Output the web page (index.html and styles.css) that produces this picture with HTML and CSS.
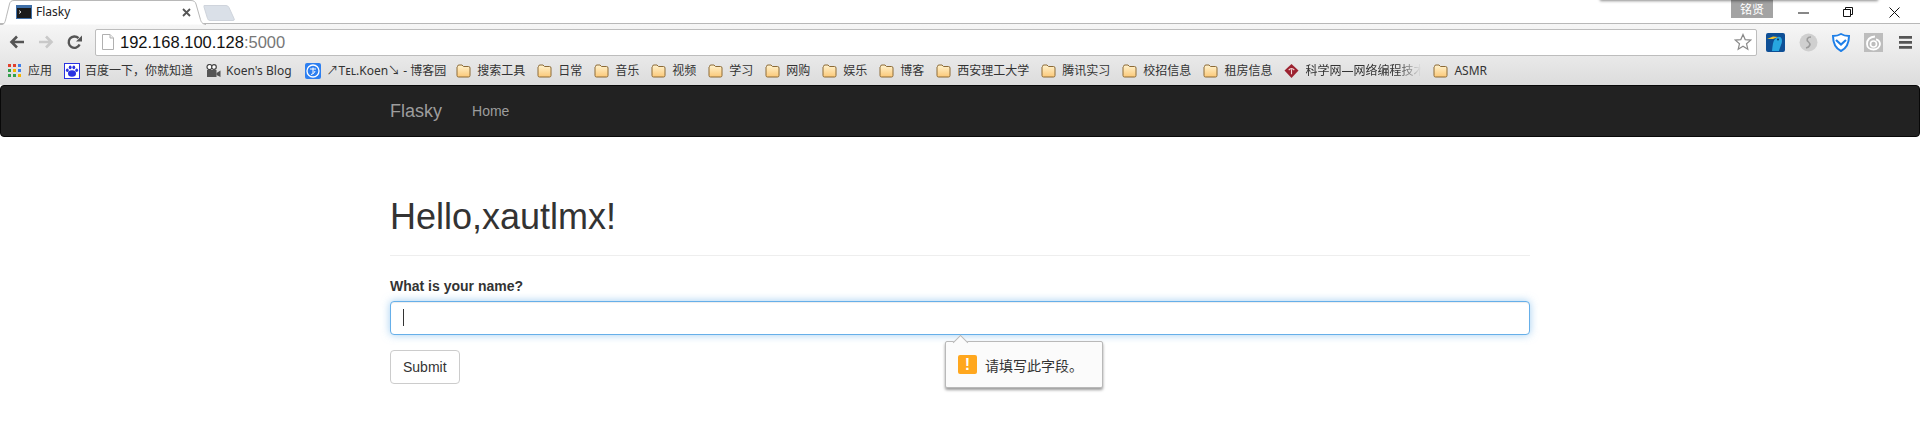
FILE: index.html
```html
<!DOCTYPE html>
<html lang="zh">
<head>
<meta charset="utf-8">
<title>Flasky</title>
<link rel="stylesheet" href="styles.css">
</head>
<body>
<svg class="defs" width="0" height="0" aria-hidden="true">
  <defs>
    <linearGradient id="folderFill" x1="0" y1="0" x2="0" y2="1">
      <stop offset="0" stop-color="#fff3cf"/>
      <stop offset="1" stop-color="#fbc878"/>
    </linearGradient>
    <symbol id="folder" viewBox="0 0 15 14">
      <path d="M1.5 2.5 Q1.5 1 3 1 H6 L7.5 2.5 H12.5 Q14 2.5 14 4 V11.5 Q14 13 12.5 13 H2.5 Q1 13 1 11.5 V3 Z" fill="url(#folderFill)" stroke="#8c6a36" stroke-width="1"/>
    </symbol>
  </defs>
</svg>

<header class="chrome">
  <div class="shade"></div>
  <div class="tabstrip">
    <div class="tab">
      <svg class="tab-shape" width="207" height="25" viewBox="0 0 207 25"><path d="M0 24.5 H2 C5 24.5 5.500 20 7 14 L9.500 4 C10 2 11 .5 14 .5 H191 C194 .5 195.500 2 196 4 L200 18 C201 22 202 24 206 24.500" fill="#fff" stroke="#b8b8b8"/></svg>
      <svg class="favicon" width="16" height="14" viewBox="0 0 16 14"><rect width="16" height="14" fill="#3f6fa8"/><rect x="1" y="3" width="14" height="10" fill="#1a1a1a"/><path d="M3 5.500 L5 7 L3 8.500" fill="none" stroke="#ddd"/></svg>
      <span class="tab-title">Flasky</span>
      <svg class="tab-close" width="9" height="9" viewBox="0 0 9 9"><path d="M1 1 L8 8 M8 1 L1 8" stroke="#555" stroke-width="1.800"/></svg>
    </div>
    <svg class="newtab" width="34" height="18" viewBox="0 0 34 18"><path d="M1 1.500 H23 Q25 1.500 26 3.500 L31 14.500 Q32 16.500 30 16.500 H7 Q5 16.500 4.500 14.500 L1 3 Z" fill="#dae0e8" stroke="#cfd4dc"/></svg>
    <div class="winbar">
      <span class="user-badge">铭贤</span>
      <svg class="win-icon win-min" width="11" height="2" viewBox="0 0 11 2"><rect width="11" height="1" y=".5" fill="#111"/></svg>
      <svg class="win-icon win-max" width="10" height="10" viewBox="0 0 10 10"><path d="M.5 2.500 H7.500 V9.500 H.5 Z M2.500 2.500 V.5 H9.500 V7.500 H7.500" fill="none" stroke="#111"/></svg>
      <svg class="win-icon win-close" width="11" height="11" viewBox="0 0 11 11"><path d="M.5 .5 L10.500 10.500 M10.500 .5 L.5 10.500" stroke="#111"/></svg>
    </div>
  </div>

  <div class="toolbar">
    <svg class="nav-icon" width="16" height="14" viewBox="0 0 16 14"><path d="M15 7 H3 M8 1.500 L2.500 7 L8 12.500" fill="none" stroke="#555" stroke-width="2.600"/></svg>
    <svg class="nav-icon" width="16" height="14" viewBox="0 0 16 14"><path d="M1 7 H13 M8 1.500 L13.500 7 L8 12.500" fill="none" stroke="#c9c9c9" stroke-width="2.600"/></svg>
    <svg class="nav-icon" width="15" height="15" viewBox="0 0 15 15"><path d="M12.600 9.500 A5.700 5.700 0 1 1 11.500 3.200" fill="none" stroke="#555" stroke-width="2.400"/><path d="M9 6.500 H15 V.5 Z" fill="#555"/></svg>
    <div class="omnibox">
      <svg class="page-icon" width="12" height="16" viewBox="0 0 12 16"><path d="M.5 .5 H8 L11.500 4 V15.500 H.5 Z" fill="#fff" stroke="#b0b0b0"/><path d="M8 .5 V4 H11.500" fill="#eee" stroke="#b0b0b0"/></svg>
      <span class="url">192.168.100.128<span class="url-port">:5000</span></span>
      <svg class="star" width="18" height="18" viewBox="0 0 18 18"><path d="M9 1.500 L11.200 6.600 L16.700 7.100 L12.500 10.700 L13.800 16.200 L9 13.300 L4.200 16.200 L5.500 10.700 L1.300 7.100 L6.800 6.600 Z" fill="#fff" stroke="#8a8a8a" stroke-width="1.200"/></svg>
    </div>
    <div class="extensions">
      <svg width="19" height="19" viewBox="0 0 19 19"><rect width="19" height="19" rx="2" fill="#0e4f96"/><path d="M6 18 C7 10 7 6 12 4 C16 3 17 8 15 12 C14 15 13 17 13 18 Z" fill="#27a6e0"/><path d="M1 6 L7 3.500 L12 4 L7 6 Z" fill="#f4c430"/><circle cx="12" cy="6.500" r="1" fill="#0b2f5a"/></svg>
      <svg width="19" height="19" viewBox="0 0 19 19"><circle cx="9.500" cy="9.500" r="9" fill="#cfcfcf"/><path d="M12 4 C8 4 7 7 9.500 9 C12 11 11 14 7 15" fill="none" stroke="#9b9b9b" stroke-width="1.600"/></svg>
      <svg width="18" height="19" viewBox="0 0 18 19"><path d="M9 1 C11.500 2.500 14 3 17 3 C17 10 15 15 9 18 C3 15 1 10 1 3 C4 3 6.500 2.500 9 1 Z" fill="#fff" stroke="#1e7fe8" stroke-width="2"/><path d="M4 7 L9 11.500 L14 7" fill="none" stroke="#1e7fe8" stroke-width="2.200"/></svg>
      <svg width="19" height="19" viewBox="0 0 19 19"><rect width="19" height="19" fill="#bdbdbd"/><circle cx="9.500" cy="11" r="3" fill="none" stroke="#fff" stroke-width="1.600"/><path d="M11 3.500 C6 4 3 7 3 11 C3 14.500 6 16.500 9.500 16.500 C13 16.500 16 14 16 11 C16 8.500 14 6.500 12 6.500" fill="none" stroke="#fff" stroke-width="1.800"/></svg>
      <svg class="menu-icon" width="13" height="13" viewBox="0 0 13 13"><path d="M0 0 H13 V2.800 H0 Z M0 5 H13 V7.800 H0 Z M0 10 H13 V12.800 H0 Z" fill="#555"/></svg>
    </div>
  </div>

  <nav class="bookmarks">
    <a class="bm bm-apps"><svg class="bm-icon" width="14" height="14" viewBox="0 0 14 14"><rect width="3" height="3" fill="#e2412d"/><rect x="5" width="3" height="3" fill="#e2412d"/><rect x="10" width="3" height="3" fill="#3f7fe8"/><rect y="5" width="3" height="3" fill="#33a04c"/><rect x="5" y="5" width="3" height="3" fill="#f5b400"/><rect x="10" y="5" width="3" height="3" fill="#3f7fe8"/><rect y="10" width="3" height="3" fill="#33a04c"/><rect x="5" y="10" width="3" height="3" fill="#33a04c"/><rect x="10" y="10" width="3" height="3" fill="#f5b400"/></svg>应用</a>
    <a class="bm bm-baidu"><svg class="bm-icon" width="16" height="16" viewBox="0 0 16 16"><rect x=".5" y=".5" width="15" height="15" fill="#fff" stroke="#2932e1"/><ellipse cx="8" cy="10.500" rx="4" ry="3.200" fill="#2932e1"/><ellipse cx="3.300" cy="7.300" rx="1.400" ry="1.800" fill="#2932e1"/><ellipse cx="6.200" cy="4.300" rx="1.400" ry="1.900" fill="#2932e1"/><ellipse cx="9.800" cy="4.300" rx="1.400" ry="1.900" fill="#2932e1"/><ellipse cx="12.700" cy="7.300" rx="1.400" ry="1.800" fill="#2932e1"/></svg>百度一下，你就知道</a>
    <a class="bm bm-koen"><svg class="bm-icon" width="15" height="14" viewBox="0 0 15 14"><circle cx="3.500" cy="3" r="2.500" fill="#fff" stroke="#444" stroke-width="1.200"/><circle cx="8" cy="3" r="2.300" fill="#fff" stroke="#444" stroke-width="1.200"/><rect x="1" y="6" width="9.500" height="7" fill="#555"/><path d="M10.500 9 L14.500 6.500 V13 L10.500 11 Z" fill="#555"/></svg>Koen's Blog</a>
    <a class="bm bm-tel"><svg class="bm-icon" width="16" height="16" viewBox="0 0 16 16"><rect width="16" height="16" rx="2" fill="#2d7ff0"/><circle cx="8" cy="8" r="6" fill="none" stroke="#fff" stroke-width="1.300"/><path d="M5 6 H11 M8 4.500 V11 M6 11.500 C8 11 9.500 10 10 8" fill="none" stroke="#fff"/></svg>↗Tᴇʟ.Koen↘ - 博客园</a>
    <a class="bm bm-folder"><svg class="bm-icon"><use href="#folder"/></svg>搜索工具</a>
    <a class="bm bm-folder"><svg class="bm-icon"><use href="#folder"/></svg>日常</a>
    <a class="bm bm-folder"><svg class="bm-icon"><use href="#folder"/></svg>音乐</a>
    <a class="bm bm-folder"><svg class="bm-icon"><use href="#folder"/></svg>视频</a>
    <a class="bm bm-folder"><svg class="bm-icon"><use href="#folder"/></svg>学习</a>
    <a class="bm bm-folder"><svg class="bm-icon"><use href="#folder"/></svg>网购</a>
    <a class="bm bm-folder"><svg class="bm-icon"><use href="#folder"/></svg>娱乐</a>
    <a class="bm bm-folder"><svg class="bm-icon"><use href="#folder"/></svg>博客</a>
    <a class="bm bm-folder"><svg class="bm-icon"><use href="#folder"/></svg>西安理工大学</a>
    <a class="bm bm-folder"><svg class="bm-icon"><use href="#folder"/></svg>腾讯实习</a>
    <a class="bm bm-folder"><svg class="bm-icon"><use href="#folder"/></svg>校招信息</a>
    <a class="bm bm-folder"><svg class="bm-icon"><use href="#folder"/></svg>租房信息</a>
    <a class="bm bm-science"><svg class="bm-icon" width="15" height="15" viewBox="0 0 15 15"><path d="M7.500 0 L15 7 L7.500 15 L0 7 Z" fill="#9c2230"/><path d="M4.500 6.500 C6 4.500 9 4.500 10.500 6.500 M7.500 6 V11" fill="none" stroke="#f3d7d7" stroke-width="1.200"/></svg><span class="bm-fade">科学网—网络编程技术</span></a>
    <a class="bm bm-folder"><svg class="bm-icon"><use href="#folder"/></svg>ASMR</a>
  </nav>
</header>

<div class="navbar">
  <div class="nav-container">
    <a class="brand">Flasky</a>
    <a class="nav-link">Home</a>
  </div>
</div>

<main class="container">
  <div class="page-header"><h1>Hello,xautlmx!</h1></div>
  <form class="form">
    <div class="form-group">
      <label class="label" for="name">What is your name?</label>
      <div class="input-wrap">
        <input class="input" id="name" type="text">
        <span class="caret"></span>
        <div class="tooltip">
          <span class="tooltip-arrow"></span>
          <span class="tooltip-icon">!</span>
          <span class="tooltip-text">请填写此字段。</span>
        </div>
      </div>
    </div>
    <button class="btn" type="button">Submit</button>
  </form>
</main>
</body>
</html>
```

FILE: styles.css
```css
* { box-sizing: border-box; }
html, body { margin: 0; padding: 0; height: 426px; overflow: hidden; background: #fff; }
body { font-family: "Liberation Sans", Arial, "Noto Sans CJK SC", sans-serif; font-size: 14px; line-height: 20px; color: #333; }
.defs { display: block; height: 0; }

/* Browser chrome */
.chrome { position: relative; height: 85px; background: linear-gradient(#fff 0, #f6f6f6 24px, #e9e9e9 56px, #dcdcdc 85px); }
.shade { position: absolute; left: 1600px; top: -6px; width: 278px; height: 6px; box-shadow: 0 1px 3px rgba(0, 0, 0, .45); }

.tabstrip { display: flex; align-items: flex-start; height: 24px; background: #fff; box-shadow: inset 0 -1px 0 #b8b8b8; }
.tab { position: relative; flex: none; display: flex; align-items: center; width: 203px; height: 25px; padding: 0 0 1px 16px; }
.tab-shape { position: absolute; left: 0; top: 0; }
.favicon, .tab-title, .tab-close { position: relative; }
.tab-title { margin-left: 4px; font-size: 12px; color: #222; font-family: "Noto Sans", sans-serif; }
.tab-close { margin-left: auto; margin-right: 12px; }
.newtab { flex: none; margin-top: 4px; }
.winbar { display: flex; align-items: flex-start; margin-left: auto; height: 24px; }
.user-badge { width: 42px; height: 18px; background: #a3a3a3; color: #fff; font: 12px/18px "Noto Sans CJK SC", sans-serif; text-align: center; }
.win-icon { flex: none; }
.win-min { margin: 12px 0 0 25px; }
.win-max { margin: 7px 0 0 34px; }
.win-close { margin: 7px 20px 0 36px; }

.toolbar { display: flex; align-items: center; height: 32px; padding: 4px 0 0 9px; }
.nav-icon { flex: none; margin-right: 13px; }
.omnibox { flex: 1; display: flex; align-items: center; height: 27px; padding: 0 4px 0 6px; background: #fff; border: 1px solid #bdbdbd; border-radius: 2px; }
.page-icon { flex: none; }
.url { margin-left: 6px; font-size: 16.500px; line-height: 20px; color: #111; }
.url-port { color: #777; }
.star { flex: none; margin-left: auto; }
.extensions { flex: none; display: flex; align-items: center; gap: 14px; width: 163px; padding-left: 9px; }
.menu-icon { margin-left: 2px; }

.bookmarks { display: flex; align-items: center; height: 29px; padding-left: 8px; white-space: nowrap; font: 12px/16px "Noto Sans", "Noto Sans CJK SC", sans-serif; color: #333; }
.bm { display: flex; align-items: center; flex: none; margin-right: 12px; }
.bm-icon { flex: none; width: 15px; height: 14px; margin-right: 6px; }
.bm-baidu .bm-icon, .bm-tel .bm-icon { width: 16px; height: 16px; }
.bm-apps .bm-icon { width: 14px; height: 14px; }
.bm-baidu .bm-icon, .bm-koen .bm-icon { margin-right: 5px; }
.bm-baidu, .bm-koen { margin-right: 13px; }
.bm-tel { margin-right: 10px; }
.bm-fade { width: 116px; -webkit-mask-image: linear-gradient(to right, #000 80%, transparent); mask-image: linear-gradient(to right, #000 80%, transparent); }

/* Page */
.navbar { height: 52px; margin-bottom: 20px; background: #222; border: 1px solid #080808; border-radius: 4px; }
.nav-container { display: flex; align-items: center; width: 1170px; height: 50px; margin: 0 auto; padding: 0 15px; }
.brand { font-size: 18px; line-height: 20px; color: #9d9d9d; margin-right: 30px; }
.nav-link { color: #9d9d9d; }

.container { width: 1170px; margin: 0 auto; padding: 40px 15px 0; }
.page-header { padding-bottom: 9px; margin-bottom: 20px; border-bottom: 1px solid #eee; }
h1 { margin: 0 0 10px; font-size: 36px; line-height: 39px; font-weight: 500; color: #333; }
.form-group { margin-bottom: 15px; }
.label { display: inline-block; margin-bottom: 5px; font-weight: 700; }
.input-wrap { position: relative; }
.input { display: block; width: 100%; height: 34px; padding: 6px 12px; font: inherit; color: #555; background: #fff; border: 1px solid #66afe9; border-radius: 4px; outline: 0; box-shadow: inset 0 1px 1px rgba(0, 0, 0, .075), 0 0 8px rgba(102, 175, 233, .6); }
.caret { position: absolute; left: 13px; top: 8px; width: 1px; height: 17px; background: #333; }
.btn { display: block; height: 34px; padding: 6px 12px; font: inherit; color: #333; background: #fff; border: 1px solid #ccc; border-radius: 4px; }

.tooltip { position: absolute; left: 555px; top: 40px; display: flex; align-items: center; width: 158px; height: 47px; padding-left: 12px; background: #fbfbfb; border: 1px solid #b9b9b9; border-radius: 2px; box-shadow: 0 2px 3px rgba(0, 0, 0, .4); }
.tooltip-arrow { position: absolute; left: 9px; top: -5px; width: 11px; height: 11px; background: #fbfbfb; border: 1px solid #b9b9b9; border-right: 0; border-bottom: 0; transform: rotate(45deg); }
.tooltip-icon { flex: none; width: 19px; height: 19px; background: #ffa71e; border-radius: 2px; color: #fff; font: 700 16px/19px "Liberation Sans", sans-serif; text-align: center; }
.tooltip-text { margin-left: 8px; font: 14px/20px "Noto Sans CJK SC", sans-serif; color: #333; }
```
